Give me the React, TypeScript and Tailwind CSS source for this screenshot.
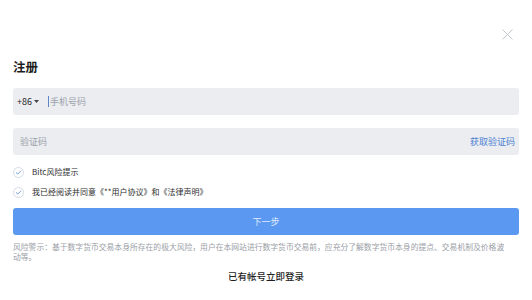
import { useState } from 'react';

const CheckCircle = () => (
  <svg width="11" height="11" viewBox="0 0 22 22" className="shrink-0">
    <circle cx="11" cy="11" r="10" fill="none" stroke="#c9d3e1" strokeWidth="1.6" />
    <path d="M6.5 11.2 L9.6 14.2 L15.6 8" fill="none" stroke="#6b95d6" strokeWidth="1.8" strokeLinecap="round" strokeLinejoin="round" />
  </svg>
);

export default function App() {
  const [phone, setPhone] = useState('');
  const [code, setCode] = useState('');

  return (
    <div
      className="w-[532px] h-[300px] bg-white overflow-hidden flex flex-col px-[13px] pt-[29px]"
      style={{ fontFamily: '"Noto Sans CJK SC", "Noto Sans", sans-serif' }}
    >
      {/* close */}
      <div className="flex justify-end h-[11px] pr-[6px]">
        <button className="w-[11px] h-[11px]">
          <svg width="11" height="11" viewBox="0 0 11 11">
            <path d="M0.5 0.5 L10.5 10.5 M10.5 0.5 L0.5 10.5" stroke="#c4c7cc" strokeWidth="1" />
          </svg>
        </button>
      </div>

      <h1 className="mt-[19px] text-[12.5px] leading-[16px] font-bold text-[#1c1c1c]">注册</h1>

      {/* phone */}
      <div className="mt-[13px] h-[27px] rounded-[3px] bg-[#ebedf1] flex items-center pl-[4px]">
        <div className="flex items-center gap-[2px] text-[9px] text-[#2a2a2a]">
          <span>+86</span>
          <svg width="5" height="3" viewBox="0 0 5 3">
            <path d="M0 0 L5 0 L2.5 3 Z" fill="#444" />
          </svg>
        </div>
        <span className="ml-[9px] w-[1px] h-[11px] bg-[#5c86c9]" />
        <input
          value={phone}
          onChange={e => setPhone(e.target.value)}
          placeholder="手机号码"
          className="flex-1 bg-transparent outline-none text-[9px] text-[#333] placeholder:text-[#9ba1aa] ml-[1px]"
        />
      </div>

      {/* code */}
      <div className="mt-[13px] h-[27px] rounded-[3px] bg-[#ebedf1] flex items-center pl-[7px] pr-[4px]">
        <input
          value={code}
          onChange={e => setCode(e.target.value)}
          placeholder="验证码"
          className="flex-1 bg-transparent outline-none text-[9px] text-[#333] placeholder:text-[#9ba1aa]"
        />
        <button className="text-[9px] text-[#4f82d2]">获取验证码</button>
      </div>

      {/* agreements */}
      <div className="mt-[10px] flex flex-col gap-[6px]">
        <label className="flex items-center h-[14px] gap-[8px] text-[8px] text-[#2e2e2e]">
          <CheckCircle />
          <span>Bitc风险提示</span>
        </label>
        <label className="flex items-center h-[14px] gap-[8px] text-[8px] text-[#2e2e2e]">
          <CheckCircle />
          <span>我已经阅读并同意《**用户协议》和《法律声明》</span>
        </label>
      </div>

      <button className="mt-[9px] h-[27px] rounded-[3px] bg-[#5b98f2] text-[9px] text-[#dfeafc]">下一步</button>

      <p className="mt-[7px] text-[7.8px] leading-[10px] text-[#9a9ea6]">
        风险警示：基于数字货币交易本身所存在的极大风险，用户在本网站进行数字货币交易前，应充分了解数字货币本身的提点、交易机制及价格波
        <br />
        动等。
      </p>

      <div className="mt-[8px] text-center text-[9.5px] leading-[12px] font-medium text-[#1f1f1f]">
        已有帐号立即登录
      </div>
    </div>
  );
}
